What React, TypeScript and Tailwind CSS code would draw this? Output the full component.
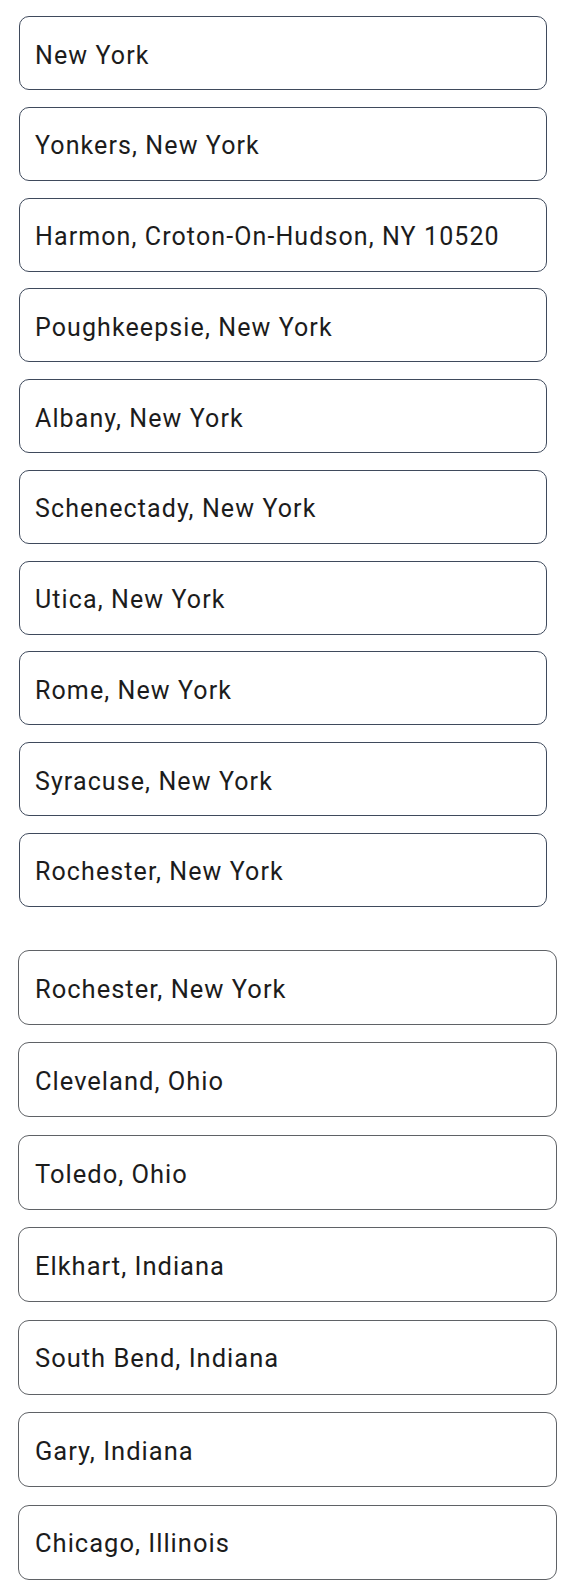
import React from "react";

const groupA = [
  "New York",
  "Yonkers, New York",
  "Harmon, Croton-On-Hudson, NY 10520",
  "Poughkeepsie, New York",
  "Albany, New York",
  "Schenectady, New York",
  "Utica, New York",
  "Rome, New York",
  "Syracuse, New York",
  "Rochester, New York",
];

const groupB = [
  "Rochester, New York",
  "Cleveland, Ohio",
  "Toledo, Ohio",
  "Elkhart, Indiana",
  "South Bend, Indiana",
  "Gary, Indiana",
  "Chicago, Illinois",
];

export default function App() {
  return (
    <div
      className="w-[566px] min-h-[1594px] bg-white text-[#1c1c1c]"
      style={{ fontFamily: "Roboto, 'Noto Sans', sans-serif" }}
    >
      <div className="flex flex-col gap-[16.77px] pt-[16px] pl-[19px] w-[547px]">
        {groupA.map((t, i) => (
          <div
            key={i}
            className="h-[74px] flex items-center rounded-[10px] border border-[#3f4a5c] pl-[15px] pr-[15px] pt-[4px] text-[25px] tracking-[1.1px] leading-none"
          >
            {t}
          </div>
        ))}
      </div>
      <div className="flex flex-col gap-[17.45px] pt-[43px] pl-[18px] w-[557px]">
        {groupB.map((t, i) => (
          <div
            key={i}
            className="h-[75px] flex items-center rounded-[11px] border border-[#5f6266] pl-[16px] pr-[16px] pt-[4px] text-[25.5px] tracking-[1px] leading-none"
          >
            {t}
          </div>
        ))}
      </div>
    </div>
  );
}
